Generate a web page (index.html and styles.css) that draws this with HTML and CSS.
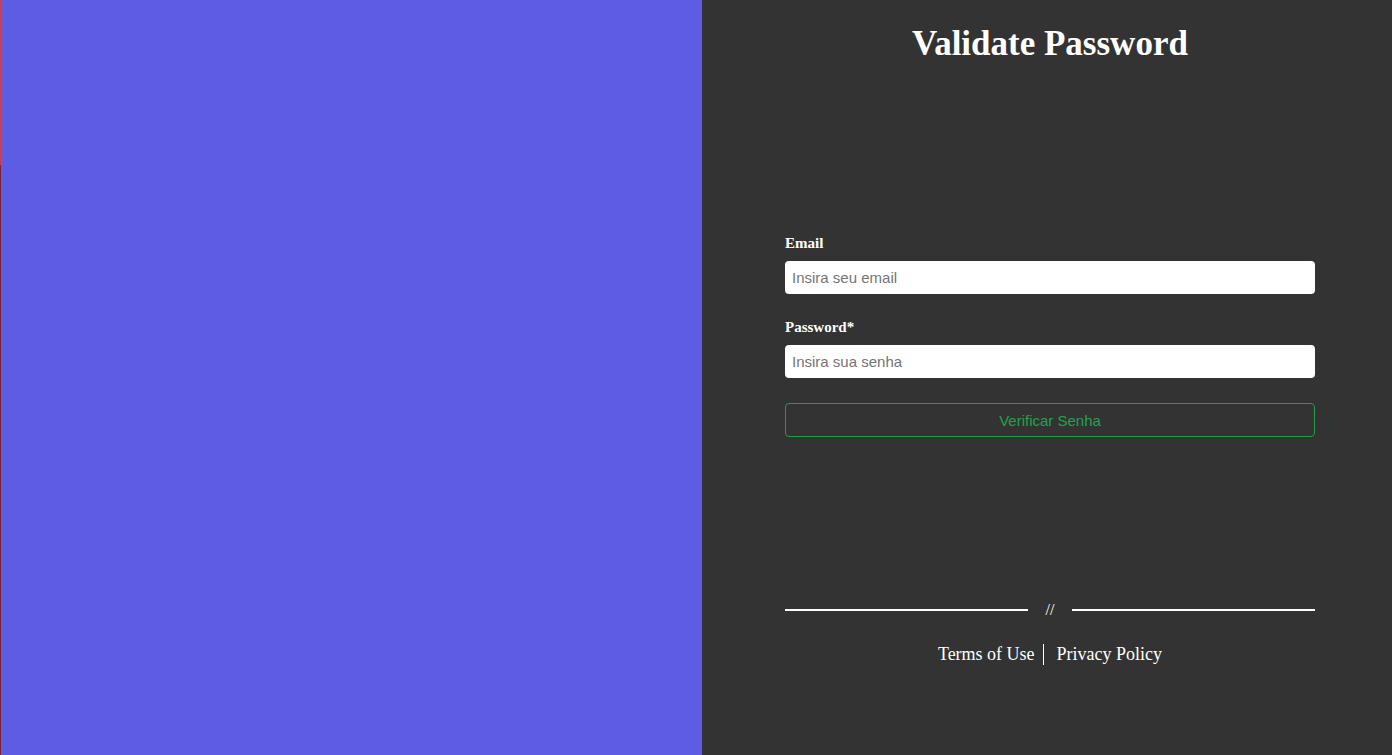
FILE: index.html
```html
<!DOCTYPE html>
<html lang="en">
<head>
<meta charset="utf-8">
<title>Validate Password</title>
<link rel="stylesheet" href="styles.css">
</head>
<body>
<div class="page">
  <div class="side"></div>
  <main class="panel">
    <h1 class="title">Validate Password</h1>
    <form class="form">
      <label class="label" for="email">Email</label>
      <input class="input" id="email" type="email" placeholder="Insira seu email">
      <label class="label label-gap" for="password">Password*</label>
      <input class="input" id="password" type="password" placeholder="Insira sua senha">
      <button class="btn" type="button">Verificar Senha</button>
    </form>
    <footer class="footer">
      <div class="divider">
        <span class="line"></span>
        <span class="slashes">//</span>
        <span class="line"></span>
      </div>
      <nav class="links">
        <a class="link link-first" href="#">Terms of Use</a>
        <a class="link link-second" href="#">Privacy Policy</a>
      </nav>
    </footer>
  </main>
</div>
</body>
</html>
```

FILE: styles.css
```css
* { box-sizing: border-box; }
html, body { margin: 0; padding: 0; }
body {
  font-family: "Liberation Serif", "Times New Roman", serif;
  background: #333333;
}
.page {
  display: flex;
  width: 1392px;
  height: 755px;
}
.side {
  position: relative;
  width: 702px;
  flex: 0 0 702px;
  background: #5d5ce2;
}
.side::before {
  content: "";
  position: absolute;
  left: 0;
  top: 0;
  width: 1px;
  height: 100%;
  background: linear-gradient(to bottom, #d23b4a 0, #d23b4a 165px, #7c2233 165px, #7c2233 100%);
}
.panel {
  flex: 1;
  background: #333333;
  display: flex;
  flex-direction: column;
  padding: 0 77px 0 83px;
}
.title {
  margin: 24px 0 0;
  font-size: 35px;
  line-height: 40px;
  font-weight: bold;
  color: #ffffff;
  text-align: center;
}
.form {
  display: flex;
  flex-direction: column;
  margin-top: 171px;
}
.label {
  font-size: 15px;
  line-height: 17px;
  font-weight: bold;
  color: #ffffff;
  margin-bottom: 9px;
}
.label-gap { margin-top: 25px; }
.input {
  width: 100%;
  height: 33px;
  border: none;
  border-radius: 4px;
  background: #ffffff;
  padding: 0 7px;
  font-family: "Liberation Sans", Arial, sans-serif;
  font-size: 15px;
  color: #222;
  outline: none;
}
.input::placeholder { color: #757575; }
.btn {
  margin-top: 25px;
  height: 34px;
  width: 100%;
  background: transparent;
  border: 1px solid #1f9d47;
  border-radius: 4px;
  color: #22a34b;
  font-family: "Liberation Sans", Arial, sans-serif;
  font-size: 15px;
  cursor: pointer;
}
.footer {
  margin-top: 164px;
}
.divider {
  display: flex;
  align-items: center;
  height: 18px;
}
.line {
  flex: 1;
  height: 2px;
  background: #ffffff;
}
.slashes {
  margin: 0 18px;
  font-size: 16px;
  line-height: 18px;
  color: #ffffff;
}
.links {
  margin-top: 25px;
  display: flex;
  justify-content: center;
  font-size: 18px;
  line-height: 21px;
}
.link {
  color: #ffffff;
  text-decoration: none;
}
.link-first {
  padding-right: 8px;
  border-right: 1px solid #ffffff;
}
.link-second {
  padding-left: 13px;
}
```
